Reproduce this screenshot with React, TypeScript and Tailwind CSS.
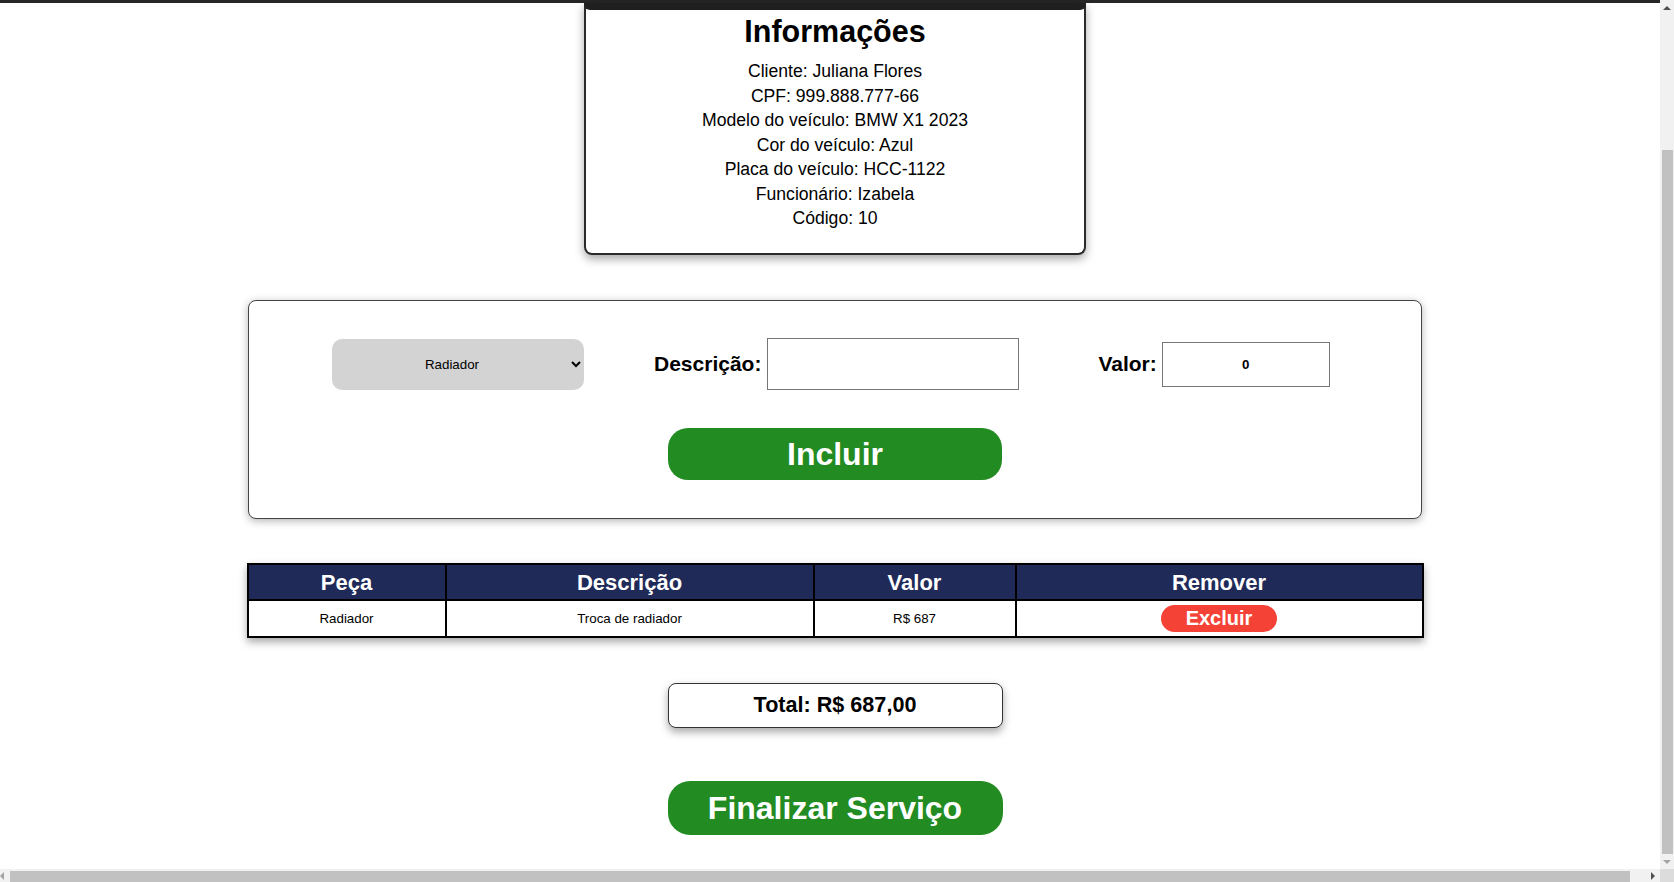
import React from "react";

const lines = [
  "Cliente: Juliana Flores",
  "CPF: 999.888.777-66",
  "Modelo do veículo: BMW X1 2023",
  "Cor do veículo: Azul",
  "Placa do veículo: HCC-1122",
  "Funcionário: Izabela",
  "Código: 10",
];

function Tri({ dir, color }: { dir: "up" | "down" | "left" | "right"; color: string }) {
  const pts: Record<string, string> = {
    up: "0,4 4,0 8,4",
    down: "0,0 8,0 4,4",
    left: "4,0 4,8 0,4",
    right: "0,0 0,8 4,4",
  };
  const horiz = dir === "left" || dir === "right";
  return (
    <svg width={horiz ? 4 : 8} height={horiz ? 8 : 4} viewBox={horiz ? "0 0 4 8" : "0 0 8 4"}>
      <polygon points={pts[dir]} fill={color} />
    </svg>
  );
}

function Content() {
  return (
    <div className="w-[1670px] shrink-0 flex flex-col items-center pb-[34px]">
      <header className="w-full h-[168px] shrink-0 bg-[#262626]" />

      <section className="w-[502px] shrink-0 flex flex-col items-center bg-white border-x-2 border-b-2 border-[#2a2a2a] rounded-b-[8px] pb-[22px] shadow-[0_4px_10px_rgba(0,0,0,0.35)]">
        <div className="self-stretch -mx-[2px] h-[7px] bg-[#1f1f1f] rounded-b-[6px]" />
        <h1 className="mt-[4px] text-[30.5px] leading-[35px] font-bold">Informações</h1>
        <div className="mt-[10px] text-[17.6px] leading-[24.55px] text-center">
          {lines.map((l) => (
            <p key={l}>{l}</p>
          ))}
        </div>
      </section>

      <section className="mt-[45px] w-[1174px] h-[219px] shrink-0 bg-white border border-[#444] rounded-[8px] pt-[37px] shadow-[0_2px_8px_rgba(0,0,0,0.3)]">
        <div className="flex items-center h-[52px] pl-[83px]">
          <select
            defaultValue="Radiador"
            className="w-[252px] h-[51px] bg-[#d3d3d3] rounded-[10px] text-[13.33px] text-center [text-align-last:center]"
          >
            <option value="Radiador">Radiador</option>
          </select>
          <label className="ml-[70px] text-[21px] font-bold">Descrição:</label>
          <input className="ml-[6px] w-[252px] h-[52px] border border-[#767676] bg-white" />
          <label className="ml-[79px] text-[21px] font-bold">Valor:</label>
          <input
            defaultValue="0"
            className="ml-[5px] w-[168px] h-[45px] border border-[#767676] bg-white text-center font-bold text-[13.33px]"
          />
        </div>
        <button className="block mx-auto mt-[38px] w-[334px] h-[52px] rounded-[20px] bg-[#228b22] text-white text-[32px] font-bold">
          Incluir
        </button>
      </section>

      <table className="mt-[44px] w-[1175px] shrink-0 table-fixed border-collapse border-2 border-black shadow-[0_4px_8px_rgba(0,0,0,0.35)]">
        <thead>
          <tr className="h-[36px] bg-[#202a58] text-white">
            <th className="w-[198px] border-2 border-black text-[22px] font-bold">Peça</th>
            <th className="w-[368px] border-2 border-black text-[22px] font-bold">Descrição</th>
            <th className="w-[202px] border-2 border-black text-[22px] font-bold">Valor</th>
            <th className="w-[407px] border-2 border-black text-[22px] font-bold">Remover</th>
          </tr>
        </thead>
        <tbody>
          <tr className="h-[37px] bg-white text-[13.33px] text-center">
            <td className="border-2 border-black">Radiador</td>
            <td className="border-2 border-black">Troca de radiador</td>
            <td className="border-2 border-black">R$ 687</td>
            <td className="border-2 border-black">
              <button className="inline-block align-middle w-[116px] h-[27px] rounded-full bg-[#f44336] text-white text-[20px] leading-[23px] font-bold">
                Excluir
              </button>
            </td>
          </tr>
        </tbody>
      </table>

      <div className="mt-[45px] w-[335px] h-[45px] shrink-0 flex items-center justify-center bg-white border border-[#333] rounded-[8px] text-[21.6px] font-bold shadow-[0_4px_8px_rgba(0,0,0,0.35)]">
        Total: R$ 687,00
      </div>

      <button className="mt-[53px] w-[335px] h-[54px] shrink-0 rounded-[22px] bg-[#228b22] text-white text-[32px] font-bold">
        Finalizar Serviço
      </button>
    </div>
  );
}

export default function App() {
  return (
    <div className="h-screen w-screen flex flex-col overflow-hidden bg-white font-['Liberation_Sans',Arial,sans-serif] text-black">
      <div className="flex flex-1 min-h-0">
        <main className="flex-1 min-w-0 overflow-hidden flex flex-col-reverse">
          <Content />
        </main>
        <div className="w-[14px] shrink-0 bg-[#f1f1f1] flex flex-col">
          <div className="h-[15px] flex items-center justify-center">
            <Tri dir="up" color="#505050" />
          </div>
          <div className="flex-1" />
          <div className="h-[704px] pl-[2px] pr-[1px]">
            <div className="h-full bg-[#c1c1c1]" />
          </div>
          <div className="h-[15px] flex items-center justify-center">
            <Tri dir="down" color="#a3a3a3" />
          </div>
        </div>
      </div>
      <div className="h-[13px] shrink-0 flex">
        <div className="flex-1 bg-[#f1f1f1] flex">
          <div className="w-[10px] flex items-center">
            <Tri dir="left" color="#a3a3a3" />
          </div>
          <div className="w-[1620px] pt-[2px]">
            <div className="h-full bg-[#c1c1c1]" />
          </div>
          <div className="flex-1" />
          <div className="w-[15px] flex items-center justify-center">
            <Tri dir="right" color="#505050" />
          </div>
        </div>
        <div className="w-[14px] bg-[#dcdcdc]" />
      </div>
    </div>
  );
}
